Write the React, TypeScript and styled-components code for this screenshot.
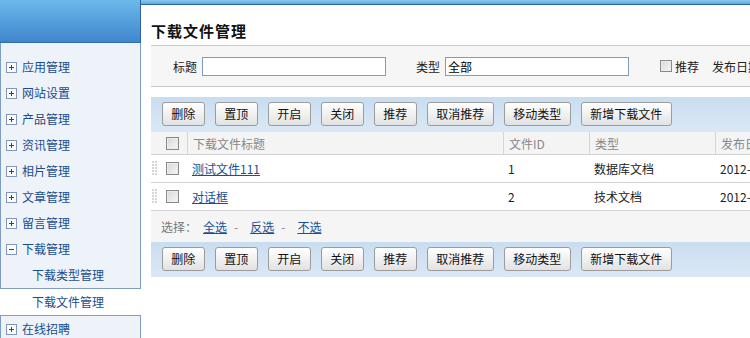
import React from 'react';
import styled, { createGlobalStyle } from 'styled-components';

const GlobalStyle = createGlobalStyle`
  html, body {
    margin: 0;
    padding: 0;
    background: #ffffff;
    overflow: hidden;
  }
  body {
    font-family: "Noto Sans CJK SC", "Liberation Sans", sans-serif;
    font-size: 12px;
    color: #333;
  }
`

const Page = styled.div`
  display: flex;
  width: 750px;
  height: 338px;
  overflow: hidden;
`

const Sidebar = styled.div`
  width: 141px;
  flex-shrink: 0;
  display: flex;
  flex-direction: column;
  overflow: hidden;
  & > * {
    flex-shrink: 0;
  }
`

const SideHeader = styled.div`
  height: 42px;
  background: linear-gradient(#6db8eb, #3f86cd);
  border-bottom: 1px solid #336fb0;
  border-right: 1px solid #2c63a0;
`

const MenuGroup = styled.div<{ $first?: boolean }>`
  background: #eef3fa;
  border: 1px solid #7d9dc3;
  border-top: ${p => (p.$first ? 'none' : '1px solid #7d9dc3')};
  padding-top: ${p => (p.$first ? '11px' : '0')};
  flex-grow: ${p => (p.$first ? 0 : 1)};
`

const MenuItem = styled.div<{ $sub?: boolean }>`
  height: 26px;
  display: flex;
  align-items: center;
  gap: 5px;
  padding-left: ${p => (p.$sub ? '31px' : '5px')};
  color: #1a4d8c;
  line-height: 26px;
  white-space: nowrap;
`

const ActiveItem = styled(MenuItem)`
  background: #ffffff;
  padding-left: 32px;
`

const ToggleBox = styled.span`
  width: 9px;
  height: 9px;
  border: 1px solid #8298b8;
  background: #fbfcfe;
  position: relative;
  flex-shrink: 0;
  &::before {
    content: '';
    position: absolute;
    left: 2px;
    top: 4px;
    width: 5px;
    height: 1px;
    background: #1d4a86;
  }
`

const PlusBox = styled(ToggleBox)`
  &::after {
    content: '';
    position: absolute;
    left: 4px;
    top: 2px;
    width: 1px;
    height: 5px;
    background: #1d4a86;
  }
`

const Main = styled.div`
  flex: 1;
  min-width: 0;
  display: flex;
  flex-direction: column;
`

const TopStrip = styled.div`
  height: 4px;
  flex-shrink: 0;
  background: linear-gradient(#8ccaf2, #5ea9e2);
  border-bottom: 1px solid #2a64a4;
`

const Panel = styled.div`
  flex: 1;
  background: #ffffff;
  padding-left: 10px;
  display: flex;
  flex-direction: column;
  & > * {
    flex-shrink: 0;
  }
`

const Title = styled.div`
  height: 41px;
  box-sizing: border-box;
  padding-top: 10px;
  display: flex;
  align-items: center;
  font-size: 15px;
  font-weight: bold;
  letter-spacing: 1px;
  color: #111;
  border-bottom: 1px solid #cacaca;
  white-space: nowrap;
`

const FilterBar = styled.div`
  height: 40px;
  background: #f6f6f6;
  border-bottom: 1px solid #cacaca;
  display: flex;
  align-items: center;
  padding-left: 22px;
  white-space: nowrap;
  color: #222;
`

const Label = styled.span<{ $gap?: number }>`
  margin-left: ${p => p.$gap ?? 0}px;
  margin-right: 5px;
`

const TextInput = styled.div`
  width: 180px;
  height: 17px;
  border: 1px solid #7f9db9;
  background: #ffffff;
  padding-left: 2px;
  line-height: 17px;
  color: #000;
  flex-shrink: 0;
  box-sizing: content-box;
`

const Check = styled.span<{ $size?: number }>`
  display: inline-block;
  width: ${p => p.$size ?? 11}px;
  height: ${p => p.$size ?? 11}px;
  border: 1px solid #8a8a8a;
  background: linear-gradient(135deg, #d8d8d8, #f6f6f6);
  box-shadow: inset 0 0 0 1px #ececec;
  flex-shrink: 0;
`

const FilterCheck = styled(Check)`
  margin-left: 31px;
  margin-right: 3px;
`

const Spacer = styled.div`
  height: 10px;
`

const Toolbar = styled.div`
  height: 35px;
  box-sizing: border-box;
  background: linear-gradient(#c9ddf0, #dae8f5);
  display: flex;
  align-items: flex-start;
  padding: 5px 0 0 10.7px;
  gap: 10px;
  white-space: nowrap;
`

const Button = styled.button`
  box-sizing: content-box;
  height: 22px;
  padding: 0 8.5px;
  margin: 0;
  border: 1px solid #9c9c9c;
  border-radius: 3px;
  background: linear-gradient(#ffffff, #e2e2e2);
  font-family: "Noto Sans CJK SC", sans-serif;
  font-size: 12px;
  color: #111;
  line-height: 22px;
  flex-shrink: 0;
`

const Row = styled.div<{ $head?: boolean }>`
  display: grid;
  grid-template-columns: 36px 316px 86px 126px 1fr;
  height: ${p => (p.$head ? '22px' : '27px')};
  background: ${p => (p.$head ? '#f4f4f4' : '#ffffff')};
  border-bottom: 1px solid #d2d2d2;
  color: ${p => (p.$head ? '#888' : '#222')};
  white-space: nowrap;
`

const Cell = styled.div<{ $line?: boolean }>`
  display: flex;
  align-items: center;
  padding-left: 5px;
  border-left: ${p => (p.$line ? '1px solid #d4d4d4' : 'none')};
  overflow: hidden;
`

const CheckCell = styled.div`
  display: flex;
  align-items: center;
  padding-left: 1px;
  gap: 9px;
`

const HeadCheckCell = styled(CheckCell)`
  padding-left: 15px;
`

const FileLink = styled.a`
  color: #1a4f92;
  text-decoration: underline;
  cursor: pointer;
`

const SelectBar = styled.div`
  height: 31px;
  background: #f5f5f5;
  display: flex;
  align-items: center;
  padding-left: 10px;
  color: #777;
  white-space: nowrap;
`

const SelectLink = styled(FileLink)`
  margin-left: 6px;
`

const Dash = styled.span`
  color: #888;
  margin: 0 12px 0 7px;
`

const Grip = () => (
  <svg width="5" height="15" viewBox="0 0 5 15">
    {[0, 3, 6, 9, 12].map(y => (
      <g key={y}>
        <rect x="0" y={y} width="2" height="2" fill="#d6d6d6" />
        <rect x="3" y={y} width="2" height="2" fill="#d6d6d6" />
      </g>
    ))}
  </svg>
)

const buttons = ['删除', '置顶', '开启', '关闭', '推荐', '取消推荐', '移动类型', '新增下载文件']

const ActionBar = () => (
  <Toolbar>
    {buttons.map(b => (
      <Button key={b}>{b}</Button>
    ))}
  </Toolbar>
)

const menu = ['应用管理', '网站设置', '产品管理', '资讯管理', '相片管理', '文章管理', '留言管理']

const files = [
  { title: '测试文件111', id: '1', type: '数据库文档', date: '2012-07-10' },
  { title: '对话框', id: '2', type: '技术文档', date: '2012-07-10' }
]

export default function App() {
  return (
    <>
      <GlobalStyle />
      <Page>
        <Sidebar>
          <SideHeader />
          <MenuGroup $first>
            {menu.map(m => (
              <MenuItem key={m}>
                <PlusBox />
                {m}
              </MenuItem>
            ))}
            <MenuItem>
              <ToggleBox />
              下载管理
            </MenuItem>
            <MenuItem $sub>下载类型管理</MenuItem>
          </MenuGroup>
          <ActiveItem>下载文件管理</ActiveItem>
          <MenuGroup>
            <MenuItem>
              <PlusBox />
              在线招聘
            </MenuItem>
          </MenuGroup>
        </Sidebar>

        <Main>
          <TopStrip />
          <Panel>
            <Title>下载文件管理</Title>
            <FilterBar>
              <Label>标题</Label>
              <TextInput />
              <Label $gap={30}>类型</Label>
              <TextInput>全部</TextInput>
              <FilterCheck $size={10} />
              <span>推荐</span>
              <Label $gap={13}>发布日期</Label>
            </FilterBar>
            <Spacer />
            <ActionBar />
            <Row $head>
              <HeadCheckCell>
                <Check />
              </HeadCheckCell>
              <Cell $line>下载文件标题</Cell>
              <Cell $line>文件ID</Cell>
              <Cell $line>类型</Cell>
              <Cell $line>发布日期</Cell>
            </Row>
            {files.map(f => (
              <Row key={f.id}>
                <CheckCell>
                  <Grip />
                  <Check />
                </CheckCell>
                <Cell>
                  <FileLink>{f.title}</FileLink>
                </Cell>
                <Cell>{f.id}</Cell>
                <Cell>{f.type}</Cell>
                <Cell>{f.date}</Cell>
              </Row>
            ))}
            <SelectBar>
              选择：
              <SelectLink>全选</SelectLink>
              <Dash>-</Dash>
              <FileLink>反选</FileLink>
              <Dash>-</Dash>
              <FileLink>不选</FileLink>
            </SelectBar>
            <ActionBar />
          </Panel>
        </Main>
      </Page>
    </>
  )
}
